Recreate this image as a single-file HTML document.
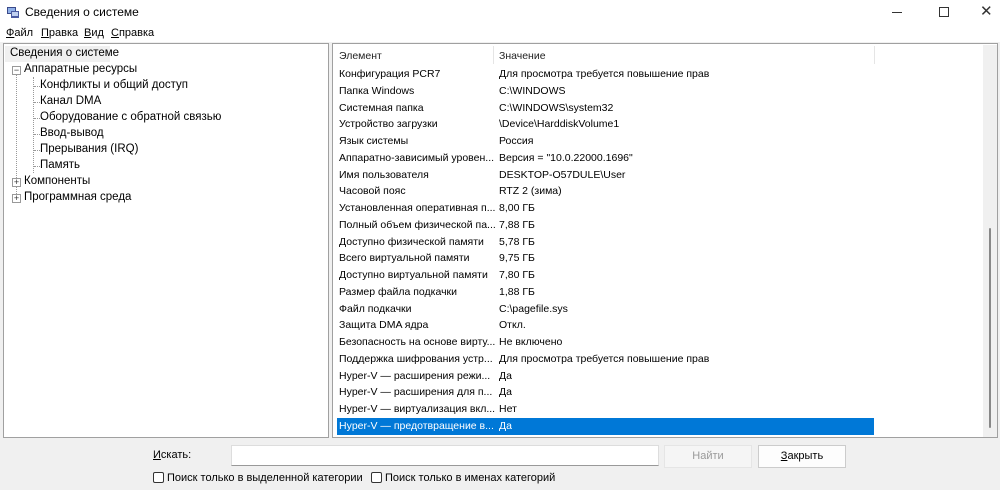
<!DOCTYPE html><html><head><meta charset="utf-8"><style>
*{margin:0;padding:0;box-sizing:border-box}
body{width:1000px;height:490px;overflow:hidden;background:#f0f0f0;font-family:"Liberation Sans","DejaVu Sans",sans-serif;font-size:11px;color:#000;position:relative}
.a{position:absolute;white-space:nowrap}
.top{position:absolute;left:0;top:0;width:1000px;height:42px;background:#fff}
.pane{position:absolute;background:#fff;border:1px solid #a0a0a0}
.row{position:absolute;left:6px;height:16px;line-height:16px;white-space:nowrap;width:530px;font-size:10.5px}
.v{position:absolute;left:160px;white-space:nowrap}
u{text-decoration:underline}
.tl{position:absolute;border-left:1px dotted #999}
.th{position:absolute;border-top:1px dotted #999;width:8px}
.box{position:absolute;width:9px;height:9px;border:1px solid #999;background:#fff;font-size:9px;line-height:7px;text-align:center;color:#333}
.btn{position:absolute;height:23px;border:1px solid #ccc;text-align:center;line-height:21px}
.cb{position:absolute;width:11px;height:11px;border:1px solid #333;background:#fff;border-radius:2px}
</style></head><body>
<div class="top"></div>
<svg class="a" style="left:6px;top:5px" width="14" height="14"><rect x="1" y="2" width="9" height="7" fill="#3a4a8a"/><rect x="2" y="3" width="7" height="5" fill="#8fb0e8"/><rect x="5" y="6" width="8" height="7" fill="#4a5aa0"/><rect x="6" y="7" width="6" height="4" fill="#c0d0f0"/></svg>
<div class="a" style="left:25px;top:5px;font-size:12px">Сведения о системе</div>
<div class="a" style="left:892px;top:12px;width:10px;border-top:1px solid #333"></div>
<div class="a" style="left:939px;top:7px;width:10px;height:10px;border:1px solid #333"></div>
<div class="a" style="left:980px;top:2px;font-size:15px;color:#333">✕</div>
<div class="a" style="left:6px;top:27px"><u>Ф</u>айл</div>
<div class="a" style="left:41px;top:27px"><u>П</u>равка</div>
<div class="a" style="left:84px;top:27px"><u>В</u>ид</div>
<div class="a" style="left:111px;top:27px"><u>С</u>правка</div>

<div class="pane" style="left:3px;top:43px;width:326px;height:395px">
<div class="a" style="left:1px;top:2px;width:105px;height:16px;background:#f0f0f0"></div>
<div class="a" style="left:6px;top:3px;font-size:11.5px">Сведения о системе</div>
<div class="tl" style="left:12px;top:26px;height:128px"></div>
<div class="tl" style="left:29px;top:33px;height:96px"></div>
<div class="th" style="left:30px;top:42px"></div><div class="th" style="left:30px;top:58px"></div><div class="th" style="left:30px;top:74px"></div><div class="th" style="left:30px;top:90px"></div><div class="th" style="left:30px;top:106px"></div><div class="th" style="left:30px;top:122px"></div>
<div class="box" style="left:8px;top:22px">−</div>
<div class="box" style="left:8px;top:134px">+</div>
<div class="box" style="left:8px;top:150px">+</div>
<div class="a" style="left:20px;top:19px;font-size:11.5px">Аппаратные ресурсы</div>
<div class="a" style="left:36px;top:35px;font-size:11.5px">Конфликты и общий доступ</div>
<div class="a" style="left:36px;top:51px;font-size:11.5px">Канал DMA</div>
<div class="a" style="left:36px;top:67px;font-size:11.5px">Оборудование с обратной связью</div>
<div class="a" style="left:36px;top:83px;font-size:11.5px">Ввод-вывод</div>
<div class="a" style="left:36px;top:99px;font-size:11.5px">Прерывания (IRQ)</div>
<div class="a" style="left:36px;top:115px;font-size:11.5px">Память</div>
<div class="a" style="left:20px;top:131px;font-size:11.5px">Компоненты</div>
<div class="a" style="left:20px;top:147px;font-size:11.5px">Программная среда</div>
</div>

<div class="pane" style="left:332px;top:43px;width:666px;height:395px">
<div class="a" style="left:160px;top:2px;height:18px;border-left:1px solid #e5e5e5"></div>
<div class="a" style="left:541px;top:2px;height:18px;border-left:1px solid #e5e5e5"></div>
<div class="row" style="top:4px;color:#222">Элемент<span class="v">Значение</span></div>
<div class="a" style="left:650px;top:1px;width:14px;height:392px;background:#f0f0f0"></div>
<div class="a" style="left:656px;top:184px;width:2px;height:200px;background:#888;border-radius:1px"></div>
<div class="a" style="left:4px;top:374px;width:537px;height:17px;background:#0078d7"></div>
<div id="rows"></div>
</div>
<script>
var d=[["Конфигурация PCR7","Для просмотра требуется повышение прав"],["Папка Windows","C:\\WINDOWS"],["Системная папка","C:\\WINDOWS\\system32"],["Устройство загрузки","\\Device\\HarddiskVolume1"],["Язык системы","Россия"],["Аппаратно-зависимый уровен...","Версия = \"10.0.22000.1696\""],["Имя пользователя","DESKTOP-O57DULE\\User"],["Часовой пояс","RTZ 2 (зима)"],["Установленная оперативная п...","8,00 ГБ"],["Полный объем физической па...","7,88 ГБ"],["Доступно физической памяти","5,78 ГБ"],["Всего виртуальной памяти","9,75 ГБ"],["Доступно виртуальной памяти","7,80 ГБ"],["Размер файла подкачки","1,88 ГБ"],["Файл подкачки","C:\\pagefile.sys"],["Защита DMA ядра","Откл."],["Безопасность на основе вирту...","Не включено"],["Поддержка шифрования устр...","Для просмотра требуется повышение прав"],["Hyper-V — расширения режи...","Да"],["Hyper-V — расширения для п...","Да"],["Hyper-V — виртуализация вкл...","Нет"],["Hyper-V — предотвращение в...","Да"]];
var h="";d.forEach(function(r,i){var t=22+i*16.76;h+='<div class="row" style="top:'+t.toFixed(1)+'px;'+(i==21?'color:#fff':'')+'">'+r[0]+'<span class="v">'+r[1]+'</span></div>';});
document.getElementById("rows").innerHTML=h;
</script>
<div class="a" style="left:153px;top:449px"><u>И</u>скать:</div>
<div class="a" style="left:231px;top:445px;width:428px;height:21px;background:#fff;border:1px solid #ddd;border-bottom-color:#999"></div>
<div class="btn" style="left:664px;top:445px;width:88px;color:#999;background:#f5f5f5;border-color:#e5e5e5">Найти</div>
<div class="btn" style="left:758px;top:445px;width:88px;background:#fdfdfd"><u>З</u>акрыть</div>
<div class="cb" style="left:153px;top:472px"></div>
<div class="a" style="left:167px;top:472px">Поиск только в выделенной категории</div>
<div class="cb" style="left:371px;top:472px"></div>
<div class="a" style="left:385px;top:472px">Поиск только в именах категорий</div>
</body></html>
